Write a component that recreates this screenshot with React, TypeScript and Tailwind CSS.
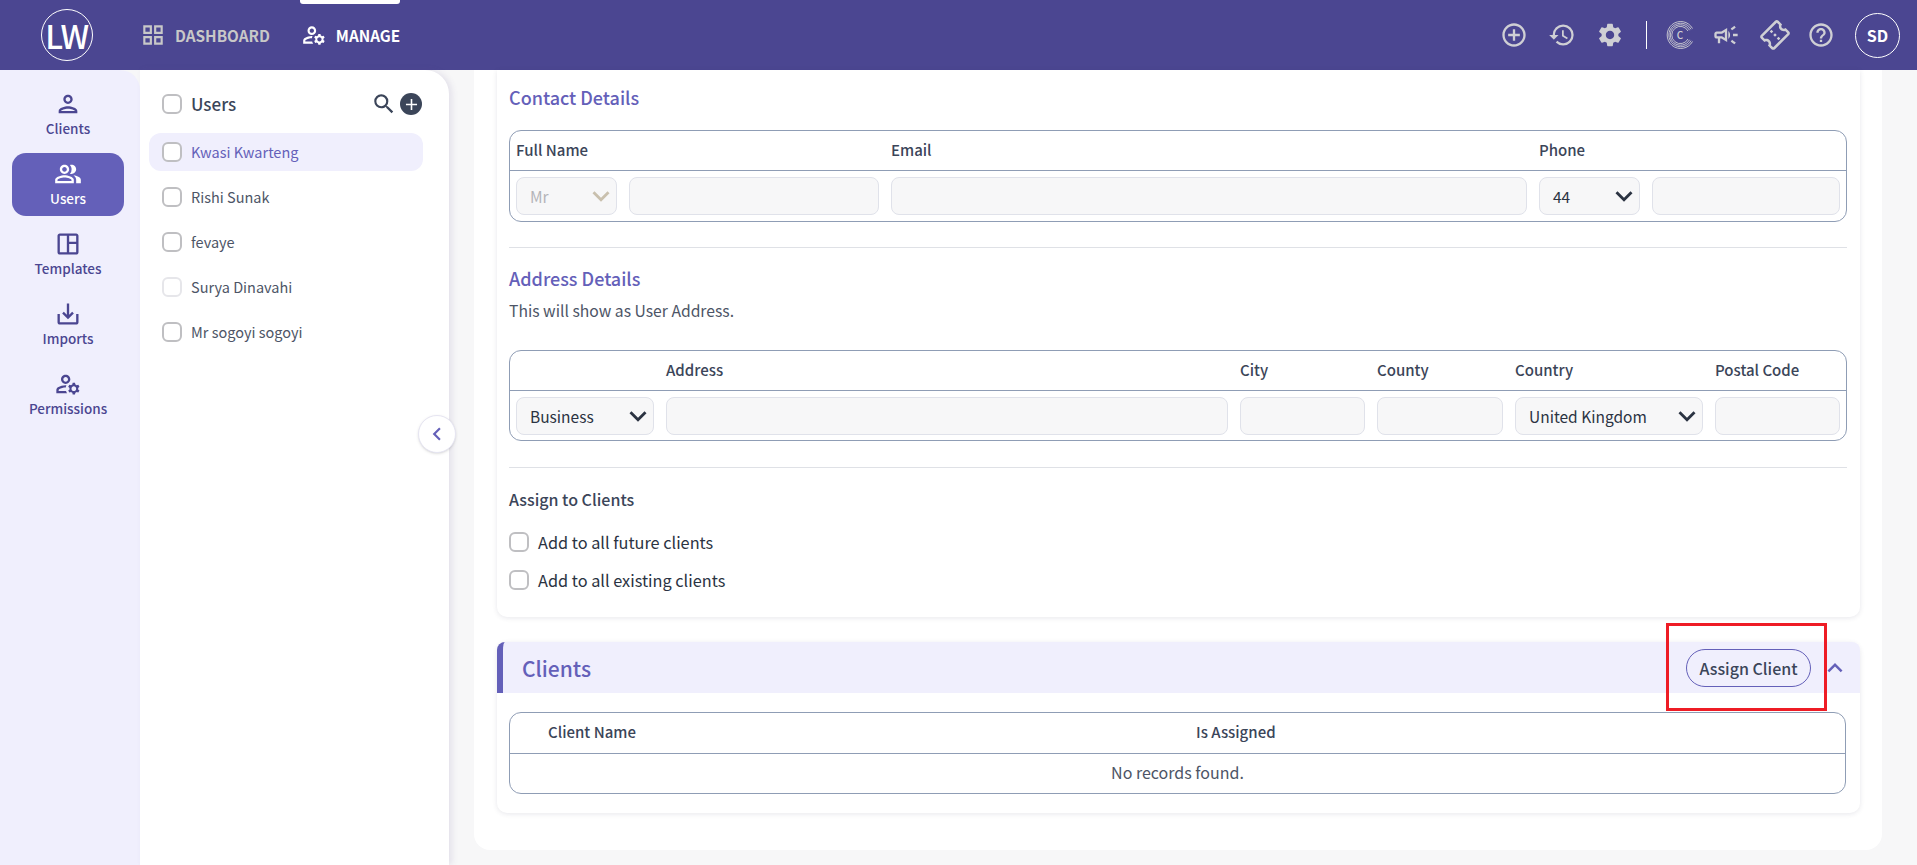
import {
  MdAdd,
  MdHelpOutline,
  MdHistory,
  MdKeyboardArrowDown,
  MdKeyboardArrowLeft,
  MdKeyboardArrowUp,
  MdOutlineAddCircleOutline,
  MdOutlineCampaign,
  MdOutlineConfirmationNumber,
  MdOutlineGridView,
  MdOutlineManageAccounts,
  MdOutlinePeopleAlt,
  MdOutlinePerson,
  MdOutlineSaveAlt,
  MdOutlineSpaceDashboard,
  MdSearch,
  MdSettings,
} from "react-icons/md";

const railItems = [
  { label: "Clients", icon: MdOutlinePerson },
  { label: "Users", icon: MdOutlinePeopleAlt, active: true },
  { label: "Templates", icon: MdOutlineSpaceDashboard },
  { label: "Imports", icon: MdOutlineSaveAlt },
  { label: "Permissions", icon: MdOutlineManageAccounts },
];

const users = [
  { name: "Kwasi Kwarteng", selected: true },
  { name: "Rishi Sunak" },
  { name: "fevaye" },
  { name: "Surya Dinavahi", faint: true },
  { name: "Mr sogoyi sogoyi" },
];

function Checkbox({ faint }: { faint?: boolean }) {
  return (
    <span
      className={`block h-[20px] w-[20px] shrink-0 rounded-[6px] border-2 bg-white ${
        faint ? "border-[#e6e6ea]" : "border-[#bfbfc2]"
      }`}
    />
  );
}

function Field() {
  return <div className="h-[38px] rounded-[8px] border border-[#e0e2ea] bg-[#f7f7f8]" />;
}

function Select({ value, muted }: { value: string; muted?: boolean }) {
  return (
    <div
      className={`flex h-[38px] items-center justify-between rounded-[8px] border border-[#e0e2ea] bg-[#f7f7f8] pl-[13px] text-[15.5px] ${
        muted ? "text-[#b4b4b8]" : "text-[#2b3342]"
      }`}
    >
      <span>{value}</span>
      <MdKeyboardArrowDown className={`-mr-[2px] text-[34px] ${muted ? "text-[#c9c0ae]" : "text-[#2b3342]"}`} />
    </div>
  );
}

function ColumnLabel({ children, className = "" }: { children: React.ReactNode; className?: string }) {
  return <div className={`text-[15px] font-medium text-[#3b4559] ${className}`}>{children}</div>;
}

function ConcentricLogo() {
  return (
    <svg width="28" height="28" viewBox="0 0 28 28" fill="none" stroke="#cfcfd4" strokeWidth="0.9">
      <path d="M26.5 7.5A13.5 13.5 0 1 0 26.5 20.5" />
      <path d="M25 8.3A11.8 11.8 0 1 0 25 19.7" />
      <path d="M23.5 9.2A10.2 10.2 0 1 0 23.5 18.8" />
      <path d="M22 10A8.6 8.6 0 1 0 22 18" />
      <text x="14" y="18" textAnchor="middle" fontSize="10" fontWeight="500" fill="#cfcfd4" stroke="none">
        C
      </text>
    </svg>
  );
}

export default function App() {
  return (
    <div
      className="flex h-[865px] w-[1917px] flex-col overflow-hidden bg-[#f7f7f8] leading-[20px] text-[#3b4559]"
      style={{ fontFamily: '"Noto Sans CJK SC", "Noto Sans", sans-serif' }}
    >
      <header className="flex h-[70px] shrink-0 items-center bg-[#4b4691]">
        <div className="ml-[41px] flex h-[52px] w-[52px] items-center justify-center rounded-full border border-white text-[32px] font-medium tracking-[-0.5px] text-white">
          LW
        </div>
        <nav className="ml-[47px] flex items-center text-[15.3px] font-bold">
          <div className="flex items-center gap-[9px] text-[#c8c8c8]">
            <MdOutlineGridView className="text-[26px]" />
            DASHBOARD
          </div>
          <div className="relative ml-[31px] flex h-[70px] items-center gap-[9px] text-white">
            <span className="absolute left-[-1px] right-0 top-0 h-[4px] rounded-b-[3px] bg-white" />
            <MdOutlineManageAccounts className="text-[26px]" />
            MANAGE
          </div>
        </nav>
        <div className="ml-auto flex items-center text-[#cfcfd4]">
          <MdOutlineAddCircleOutline className="text-[28px]" />
          <MdHistory className="ml-[20px] text-[28px]" />
          <MdSettings className="ml-[20px] text-[28px]" />
          <span className="ml-[22px] mr-[19px] h-[28px] w-px bg-white" />
          <ConcentricLogo />
          <MdOutlineCampaign className="ml-[18px] text-[28px]" />
          <MdOutlineConfirmationNumber className="ml-[20px] -rotate-45 text-[30px]" />
          <MdHelpOutline className="ml-[17px] text-[28px]" />
          <div className="ml-[20px] mr-[17px] flex h-[45px] w-[45px] items-center justify-center rounded-full border border-white text-[16px] font-bold text-white">
            SD
          </div>
        </div>
      </header>

      <div className="flex min-h-0 flex-1">
        <aside className="z-10 flex w-[140px] shrink-0 flex-col items-start rounded-tr-[20px] bg-[#f0effd] pt-[13px]">
          {railItems.map((item) => (
            <div
              key={item.label}
              className={`ml-[12px] mb-[7px] flex h-[63px] w-[112px] flex-col items-center justify-center rounded-[14px] pb-[2px] text-[13.5px] font-medium ${
                item.active ? "bg-[#6460b9] text-white" : "text-[#4b4691]"
              }`}
            >
              <item.icon className="text-[28px]" />
              <span>{item.label}</span>
            </div>
          ))}
        </aside>

        <section className="relative z-10 w-[309px] shrink-0 rounded-tr-[24px] bg-white pl-[9px] pt-[17px] shadow-[3px_0_6px_rgba(90,70,140,0.12)]">
          <div className="flex h-[34px] items-center pl-[13px]">
            <Checkbox />
            <span className="ml-[9px] text-[17px] font-medium">Users</span>
            <MdSearch className="ml-auto text-[26px]" />
            <span className="ml-[3px] mr-[27px] flex h-[22px] w-[22px] items-center justify-center rounded-full bg-[#3b4559] text-white">
              <MdAdd className="text-[19px]" />
            </span>
          </div>
          <ul className="mt-[12px]">
            {users.map((user) => (
              <li
                key={user.name}
                className={`mb-[7px] flex h-[38px] w-[274px] items-center rounded-[12px] pl-[13px] text-[14.5px] ${
                  user.selected ? "bg-[#f0effd] text-[#6460b9]" : "text-[#4d5566]"
                }`}
              >
                <Checkbox faint={user.faint} />
                <span className="ml-[9px]">{user.name}</span>
              </li>
            ))}
          </ul>
          <button className="absolute right-[-7px] top-[345px] flex h-[38px] w-[38px] items-center justify-center rounded-full border border-[#e6e5f2] bg-white text-[#6460b9] shadow-sm">
            <MdKeyboardArrowLeft className="text-[26px]" />
          </button>
        </section>

        <main className="min-w-0 flex-1 pb-[15px] pl-[25px] pr-[35px]">
          <div className="h-full rounded-b-[16px] bg-white pl-[23px] pr-[22px]">
            <div className="h-[547px] rounded-b-[10px] bg-white pl-[12px] pr-[13px] shadow-[0_1px_5px_rgba(60,60,90,0.12)]">
              <h2 className="pt-[17px] text-[18px] font-medium text-[#6460b9]">Contact Details</h2>
              <div className="mt-[23px] h-[92px] rounded-[12px] border border-[#8f9db5]">
                <div className="grid h-[39px] grid-cols-[101px_250px_636px_101px_188px] items-center gap-x-[12px] pb-[2px] pl-[6px]">
                  <ColumnLabel className="col-span-2">Full Name</ColumnLabel>
                  <ColumnLabel>Email</ColumnLabel>
                  <ColumnLabel className="col-span-2">Phone</ColumnLabel>
                </div>
                <div className="grid h-[51px] grid-cols-[101px_250px_636px_101px_188px] gap-x-[12px] border-t border-[#8f9db5] pl-[6px] pt-[6px]">
                  <Select value="Mr" muted />
                  <Field />
                  <Field />
                  <Select value="44" />
                  <Field />
                </div>
              </div>
              <hr className="mt-[25px] border-[#dfe1e6]" />
              <h2 className="mt-[20px] text-[18px] font-medium text-[#6460b9]">Address Details</h2>
              <p className="mt-[13px] text-[15.7px] text-[#4d5566]">This will show as User Address.</p>
              <div className="mt-[29px] h-[91px] rounded-[12px] border border-[#8f9db5]">
                <div className="grid h-[39px] grid-cols-[138px_562px_125px_126px_188px_125px] items-center gap-x-[12px] pb-[2px] pl-[6px]">
                  <span />
                  <ColumnLabel>Address</ColumnLabel>
                  <ColumnLabel>City</ColumnLabel>
                  <ColumnLabel>County</ColumnLabel>
                  <ColumnLabel>Country</ColumnLabel>
                  <ColumnLabel>Postal Code</ColumnLabel>
                </div>
                <div className="grid h-[50px] grid-cols-[138px_562px_125px_126px_188px_125px] gap-x-[12px] border-t border-[#8f9db5] pl-[6px] pt-[6px]">
                  <Select value="Business" />
                  <Field />
                  <Field />
                  <Field />
                  <Select value="United Kingdom" />
                  <Field />
                </div>
              </div>
              <hr className="mt-[26px] border-[#dfe1e6]" />
              <div className="mt-[21px] text-[16px] font-medium">Assign to Clients</div>
              <label className="mt-[23px] flex items-center gap-[9px] text-[16.3px] text-[#2b3342]">
                <Checkbox />
                Add to all future clients
              </label>
              <label className="mt-[18px] flex items-center gap-[9px] text-[16.3px] text-[#2b3342]">
                <Checkbox />
                Add to all existing clients
              </label>
            </div>

            <div className="mt-[25px] h-[171px] rounded-[10px] bg-white shadow-[0_1px_5px_rgba(60,60,90,0.12)]">
              <div className="relative flex h-[51px] items-center rounded-t-[8px] border-l-[6px] border-[#6460b9] bg-[#f0effd] pl-[19px] pr-[10px]">
                <span className="text-[21px] font-medium text-[#6460b9]">Clients</span>
                <button className="ml-auto flex h-[38px] w-[125px] items-center justify-center rounded-full border border-[#6460b9] text-[16px] font-medium text-[#3b4559]">
                  Assign Client
                </button>
                <MdKeyboardArrowUp className="ml-[9px] text-[30px] text-[#6460b9]" />
                <span className="pointer-events-none absolute bottom-[-18px] right-[33px] top-[-19px] w-[161px] border-[3px] border-[#ee1c25]" />
              </div>
              <div className="ml-[12px] mr-[14px] mt-[19px] h-[82px] rounded-[12px] border border-[#8f9db5] text-[15px]">
                <div className="grid h-[40px] grid-cols-[648px_1fr] items-center pb-[2px] pl-[38px] font-medium">
                  <span>Client Name</span>
                  <span>Is Assigned</span>
                </div>
                <div className="flex h-[40px] items-center justify-center border-t border-[#8f9db5] pb-[4px] text-[16px] text-[#4d5566]">
                  No records found.
                </div>
              </div>
            </div>
          </div>
        </main>
      </div>
    </div>
  );
}
